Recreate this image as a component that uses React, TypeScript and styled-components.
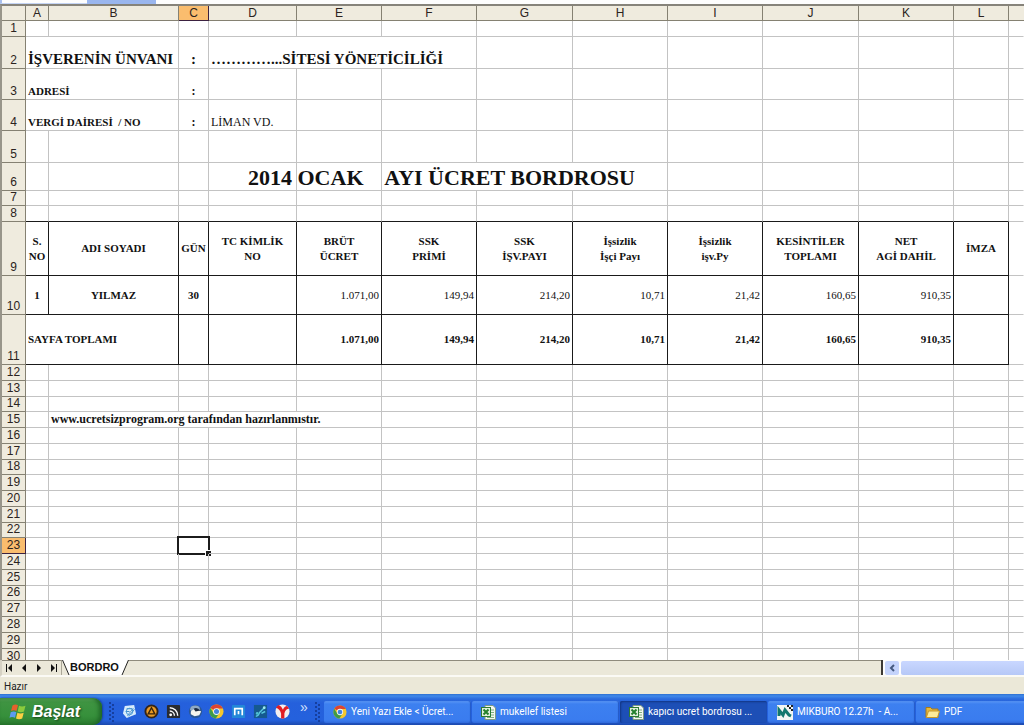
import React from "react";
import styled, { createGlobalStyle, css } from "styled-components";

const GlobalStyle = createGlobalStyle`
  *, *::before, *::after { box-sizing: border-box; }
  html, body { margin: 0; }
  button { font: inherit; color: inherit; background: none; border: 0; padding: 0; margin: 0; }
`;

const serif = `"Liberation Serif", "Times New Roman", serif`;
const sans = `"Liberation Sans", Arial, sans-serif`;
const ui = `Roboto, "Noto Sans", Tahoma, sans-serif`;

const Window = styled.div`
  display: flex;
  flex-direction: column;
  height: 100vh;
  min-height: 320px;
  overflow: hidden;
  background: #fff;
  font-family: ${sans};
`;

const ToolbarEdge = styled.div`
  flex: none;
  display: flex;
  height: 4px;
  background: #fdfdfd;
`;

const EdgeField = styled.span`
  width: 87px;
  border-left: 2px solid #a9c0ee;
  border-bottom: 1px solid #c3d3f3;
`;

const EdgeHighlight = styled.span`
  width: 69px;
  background: #9ab6ee;
`;

const SheetArea = styled.main`
  flex: 1;
  min-height: 0;
  overflow: hidden;
  border-left: 2px solid #98958a;
  border-top: 2px solid #86837a;
`;

const Grid = styled.table`
  width: 100%;
  table-layout: fixed;
  border-collapse: separate;
  border-spacing: 0;
  color: #111;
`;

const headBase = css<{ $active?: boolean }>`
  padding: 0;
  font-size: 12px;
  font-weight: 400;
  text-align: center;
  color: #2b2320;
  background: ${(p) => (p.$active ? "#fabd6e" : "#efebde")};
  border-right: 1px solid ${(p) => (p.$active ? "#3b2140" : "#858172")};
  border-bottom: 1px solid ${(p) => (p.$active ? "#3b2140" : "#858172")};
`;

const ColumnHead = styled.th<{ $active?: boolean }>`
  ${headBase}
  height: 15px;
  line-height: 14px;

  &:last-child { border-right: 0; }
`;

const RowHead = styled.th<{ $active?: boolean }>`
  ${headBase}
  padding-bottom: 1px;
  line-height: 13px;
  vertical-align: bottom;
`;

const Row = styled.tr<{ $height: number }>`
  height: ${(p) => p.$height}px;
`;

type CellLook = {
  $right: string;
  $bottom: string;
  $align?: string;
  $valign?: string;
  $bold?: boolean;
  $size?: number;
  $indent?: number;
};

const Cell = styled.td<CellLook>`
  position: relative;
  padding: 0 2px 0 ${(p) => p.$indent ?? 2}px;
  border-right: 1px solid ${(p) => p.$right};
  border-bottom: 1px solid ${(p) => p.$bottom};
  font-family: ${serif};
  font-size: ${(p) => p.$size ?? 11}px;
  font-weight: ${(p) => (p.$bold ? 700 : 400)};
  line-height: ${(p) => (p.$size && p.$size > 12 ? p.$size + 3 : 15)}px;
  text-align: ${(p) => p.$align ?? "left"};
  vertical-align: ${(p) => p.$valign ?? "bottom"};
  white-space: pre;
`;

const Selection = styled.span`
  position: absolute;
  inset: -2px;
  border: 2px solid #1c1c1c;

  &::after {
    content: "";
    position: absolute;
    right: -3px;
    bottom: -3px;
    width: 6px;
    height: 6px;
    background: #1c1c1c;
    border-top: 1px solid #fff;
    border-left: 1px solid #fff;
  }
`;

const TabBar = styled.nav`
  flex: none;
  display: flex;
  height: 17px;
  background: #ebe8d9;
  border-left: 2px solid #d6d2c4;
  border-bottom: 2px solid #fbfaf5;
`;

const TabArrows = styled.div`
  display: flex;
  width: 60px;
  border-top: 1px solid #8f8b7d;
  border-right: 1px solid #aaa698;
`;

const ArrowButton = styled.button`
  flex: 1;
  display: flex;
  align-items: center;
  justify-content: center;
`;

const SheetTab = styled.button`
  display: flex;
  align-items: center;
  font-size: 11px;
  line-height: 15px;
  font-weight: 700;
  color: #111;
`;

const TabLabel = styled.span`
  background: #fff;
`;

const TabFill = styled.div`
  flex: 1;
  border-top: 1px solid #8f8b7d;
`;

const ScrollTrack = styled.div`
  display: flex;
  gap: 2px;
  width: 14%;
  padding: 1px 0 0 2px;
  border-left: 2px solid #3d3a35;
  background: #fdfdfd;
`;

const ScrollButton = styled.button`
  display: flex;
  width: 14px;
  align-items: center;
  justify-content: center;
  background: #c4d3fb;
  border-radius: 2px;
`;

const ScrollThumb = styled.div`
  flex: 1;
  background: linear-gradient(#c9d7ff, #b6c8f7);
  border-radius: 2px 0 0 2px;
`;

const StatusBar = styled.footer`
  flex: none;
  height: 17px;
  padding-left: 4px;
  background: #ebe8d8;
  font-family: ${ui};
  font-size: 10px;
  line-height: 20px;
  color: #222;
`;

const Taskbar = styled.div`
  flex: none;
  display: flex;
  height: 31px;
  padding-top: 4px;
  color: #fff;
  background: linear-gradient(#2d6fd0 0, #4089ea 2px, #2b6add 5px, #2560dc 9px, #2461dd 26px, #1c49ad 31px);
`;

const StartButton = styled.button`
  display: flex;
  align-items: center;
  gap: 5px;
  width: 102px;
  padding-left: 9px;
  border-radius: 0 9px 9px 0;
  background: linear-gradient(#5fa75c 0, #3f9442 4px, #36903b 18px, #2a7a2f 27px);
  box-shadow: inset -3px 0 4px #1f6626, 1px 0 2px #173f99;
  font-size: 16px;
  font-weight: 700;
  font-style: italic;
  text-shadow: 1px 1px 2px #16451b;
`;

const QuickLaunch = styled.div`
  display: flex;
  align-items: center;
  width: 222px;
  padding: 0 3px 0 7px;
`;

const QuickButton = styled.button`
  display: flex;
  justify-content: center;
  flex: 1;
`;

const QuickIcons = styled.div`
  display: flex;
  flex: 1;
  padding: 0 4px 0 4px;
`;

const Chevron = styled.button`
  width: 14px;
  margin-right: 4px;
  font-size: 14px;
  line-height: 16px;
  padding-bottom: 10px;
  color: #d5e2fb;
`;

const TaskList = styled.div`
  flex: 1;
  display: flex;
  gap: 1px;
  min-width: 0;
  padding: 3px 0 2px;
  overflow: hidden;
`;

const TaskButton = styled.button<{ $active?: boolean }>`
  flex: 0 0 147px;
  display: flex;
  align-items: center;
  gap: 4px;
  padding-left: 9px;
  border-radius: 2px;
  font-family: ${ui};
  font-size: 10px;
  line-height: 14px;
  white-space: pre;
  text-align: left;
  background: ${(p) => (p.$active ? "#1d4fb6" : "linear-gradient(#5b97f5 0, #3d80f0 3px, #3a7cef 19px, #316bdc 22px)")};
  box-shadow: ${(p) => (p.$active ? "inset 1px 1px 2px #123583" : "inset -1px 0 1px #2459c6")};
`;

type CellSpec = {
  text?: string;
  span?: number;
  align?: string;
  valign?: string;
  bold?: boolean;
  size?: number;
  indent?: number;
};

const LETTERS = ["A", "B", "C", "D", "E", "F", "G", "H", "I", "J", "K", "L"];
const WIDTHS = [23, 130, 30, 88, 85, 95, 96, 95, 95, 96, 95, 55];

const HEIGHTS: Record<number, number> = {
  2: 32, 3: 31, 4: 31, 5: 32, 6: 28, 7: 15, 9: 54, 10: 39, 11: 50, 14: 15, 18: 15, 22: 15, 26: 15,
};

const mid = (text: string): CellSpec => ({ text, align: "center", valign: "middle", bold: true });
const amount = (text: string, bold = false): CellSpec => ({ text, align: "right", valign: "middle", bold });

/* Cells by row number, keyed by the letter of their first column. */
const CONTENT: Record<number, Record<string, CellSpec>> = {
  2: {
    A: { text: "İŞVERENİN ÜNVANI", span: 2, bold: true, size: 15 },
    C: { text: ":", align: "center", bold: true, size: 15 },
    D: { text: "…………...SİTESİ YÖNETİCİLİĞİ", span: 3, bold: true, size: 15 },
  },
  3: {
    A: { text: "ADRESİ", span: 2, bold: true },
    C: { text: ":", align: "center", bold: true, size: 12 },
  },
  4: {
    A: { text: "VERGİ DAİRESİ  / NO", span: 2, bold: true },
    C: { text: ":", align: "center", bold: true, size: 12 },
    D: { text: "LİMAN VD.", size: 12 },
  },
  6: {
    D: { text: "2014 OCAK    AYI ÜCRET BORDROSU", bold: true, size: 22, indent: 39 },
    F: { span: 3 },
  },
  9: {
    A: mid("S.\nNO"),
    B: mid("ADI SOYADI"),
    C: mid("GÜN"),
    D: mid("TC KİMLİK\nNO"),
    E: mid("BRÜT\nÜCRET"),
    F: mid("SSK\nPRİMİ"),
    G: mid("SSK\nİŞV.PAYI"),
    H: mid("İşsizlik\nİşçi Payı"),
    I: mid("İşsizlik\nişv.Py"),
    J: mid("KESİNTİLER\nTOPLAMI"),
    K: mid("NET\nAGİ DAHİL"),
    L: mid("İMZA"),
  },
  10: {
    A: mid("1"),
    B: mid("YILMAZ"),
    C: mid("30"),
    E: amount("1.071,00"),
    F: amount("149,94"),
    G: amount("214,20"),
    H: amount("10,71"),
    I: amount("21,42"),
    J: amount("160,65"),
    K: amount("910,35"),
  },
  11: {
    A: { text: "SAYFA TOPLAMI", span: 2, bold: true, valign: "middle" },
    E: amount("1.071,00", true),
    F: amount("149,94", true),
    G: amount("214,20", true),
    H: amount("10,71", true),
    I: amount("21,42", true),
    J: amount("160,65", true),
    K: amount("910,35", true),
  },
  15: {
    B: { text: "www.ucretsizprogram.org tarafından hazırlanmıstır.", span: 4, bold: true, size: 12 },
  },
};

const LINE = "#c3c3c3";
const INK = "#1a1a1a";

function SheetRow({ n }: { n: number }) {
  const boxed = n >= 9 && n <= 11;
  const cells: React.ReactNode[] = [];
  for (let i = 0; i < LETTERS.length; ) {
    const spec = CONTENT[n]?.[LETTERS[i]] ?? {};
    cells.push(
      <Cell
        key={LETTERS[i]}
        colSpan={spec.span}
        $right={boxed ? INK : LINE}
        $bottom={boxed || n === 8 ? INK : LINE}
        $align={spec.align}
        $valign={spec.valign}
        $bold={spec.bold}
        $size={spec.size}
        $indent={spec.indent}
      >
        {spec.text}
        {n === 23 && LETTERS[i] === "C" && <Selection />}
      </Cell>
    );
    i += spec.span ?? 1;
  }
  return (
    <Row $height={HEIGHTS[n] ?? 16}>
      <RowHead scope="row" $active={n === 23}>{n}</RowHead>
      {cells}
      <Cell $right="transparent" $bottom={LINE} />
    </Row>
  );
}

function Arrow({ flip, bar }: { flip?: boolean; bar?: boolean }) {
  return (
    <svg width="8" height="8" viewBox="0 0 8 8" fill="#111" aria-hidden="true">
      <g transform={flip ? "translate(8 0) scale(-1 1)" : undefined}>
        <path d={bar ? "M7 0v8L3 4z" : "M6 0v8L2 4z"} />
        {bar && <path d="M1 0h1v8H1z" />}
      </g>
    </svg>
  );
}

function Handle() {
  return (
    <svg width="6" height="20" viewBox="0 0 6 20" fill="#163f9e" aria-hidden="true">
      {[0, 4, 8, 12, 16].map((y) => (
        <g key={y}>
          <rect x="0" y={y} width="2" height="2" />
          <rect x="3" y={y + 2} width="2" height="2" />
        </g>
      ))}
    </svg>
  );
}

function WindowsFlag() {
  return (
    <svg width="18" height="18" viewBox="0 0 18 18" aria-hidden="true">
      <path d="M3.5 2.5q3-2 5.500-.2L7.500 8Q4.800 6.500 2 8z" fill="#e8602c" />
      <path d="M10 2.800q3 1.500 6.500 0L15 8.600q-3.200 1.500-6.300-.1z" fill="#8ccb3d" />
      <path d="M1.700 9.200q3-1.500 5.600 0L6 14.800q-3-1.700-5.500-.1z" fill="#5b9bf0" />
      <path d="M8.400 9.700q3 1.500 6.300 0l-1.500 5.800q-3.300 1.400-6.200-.1z" fill="#fbd043" />
    </svg>
  );
}

function Chrome({ size = 14 }: { size?: number }) {
  return (
    <svg width={size} height={size} viewBox="0 0 16 16" aria-hidden="true">
      <circle cx="8" cy="8" r="7.500" fill="#f4c72c" />
      <path d="M8 8 1.500 4.200A7.500 7.500 0 0 1 14.700 4.700H8z" fill="#dc4433" />
      <path d="M8 8 4.900 9.800 1.500 4.200A7.500 7.500 0 0 0 7.300 15.500L11 9.600z" fill="#3f9b48" />
      <circle cx="8" cy="8" r="3.600" fill="#f5f5f5" />
      <circle cx="8" cy="8" r="2.700" fill="#4484dc" />
    </svg>
  );
}

function Excel() {
  return (
    <svg width="15" height="15" viewBox="0 0 15 15" aria-hidden="true">
      <path d="M4 .5h8l2.500 2.500v11.500H4z" fill="#f3f6f0" stroke="#7e9b83" />
      <path d="M10 5h3M10 7.500h3M10 10h3M6 12.500h7" stroke="#7daf7d" />
      <rect x="0.500" y="2.500" width="9" height="9" fill="#e0efdd" stroke="#2d7b35" />
      <path d="m2.500 4.500 5 5m0-5-5 5" stroke="#24802d" strokeWidth="2" />
    </svg>
  );
}

function Mikburo() {
  return (
    <svg width="16" height="15" viewBox="0 0 16 15" aria-hidden="true">
      <rect width="16" height="15" fill="#f2f5f4" />
      <path d="M2 11V5l4 5 2-5 4 5 2 1" fill="none" stroke="#12776f" strokeWidth="3" />
      <path d="M10 0h2v2h-2zM14 0h2v2h-2zM12 2h2v2h-2zM14 4h2v2h-2z" fill="#222" />
    </svg>
  );
}

function Folder() {
  return (
    <svg width="15" height="14" viewBox="0 0 15 14" aria-hidden="true">
      <path d="M1 2.500h4.500L7 4h6v8.500H1z" fill="#e8b93c" stroke="#a67b1a" />
      <path d="M3.500 6H14.500l-2 6.500H1.300z" fill="#fdeb9a" stroke="#c7972b" />
    </svg>
  );
}

const quickIcons: { name: string; art: React.ReactNode }[] = [
  {
    name: "Masaüstünü göster",
    art: (
      <>
        <path d="M3 2 13 1l2 10-10 4-4-5z" fill="#d8ecfb" />
        <path d="M5 5h6M4 8h4M6 12l6-7 1 1-6 7z" stroke="#3a86c8" fill="#fff" />
        <circle cx="8" cy="8" r="3.500" fill="none" stroke="#4a9bd8" />
      </>
    ),
  },
  {
    name: "AIMP",
    art: (
      <>
        <circle cx="8" cy="8" r="6.500" fill="#e99a24" stroke="#33251a" strokeWidth="2" />
        <path d="m8 4 3.500 6.500h-7z" fill="none" stroke="#38240d" strokeWidth="1.500" />
      </>
    ),
  },
  {
    name: "RSS",
    art: (
      <>
        <rect x="1" y="1" width="14" height="14" rx="1" fill="#292b30" />
        <circle cx="5" cy="11.500" r="1.500" fill="#fff" />
        <path d="M4 7.500a5 5 0 0 1 5 5M4 4a8.500 8.500 0 0 1 8.500 8.500" fill="none" stroke="#fff" strokeWidth="1.500" />
      </>
    ),
  },
  {
    name: "Posta",
    art: (
      <>
        <circle cx="8" cy="8" r="7" fill="#2a5796" />
        <path d="M3 3q5-3 9 0l1 3-9 2-2-2z" fill="#8fa9c4" />
        <path d="M3 8q3-4 8-2l3 2-2 4-5 1-4-2z" fill="#f6f5ef" />
        <path d="M6 5q4-2 7 2l-5 1z" fill="#1c2a40" />
      </>
    ),
  },
  { name: "Chrome", art: <Chrome size={16} /> },
  {
    name: "Maxthon",
    art: (
      <>
        <rect x="1" y="1" width="14" height="14" rx="1" fill="#2388d8" />
        <path d="M4 12V5h8v7M8 7.500V11" fill="none" stroke="#fff" strokeWidth="1.800" />
      </>
    ),
  },
  {
    name: "Ağ bağlantısı",
    art: (
      <>
        <rect x="1" y="1" width="14" height="14" fill="#15598f" />
        <path d="M3 13q3 0 4-4M7 9l5-5M9 10l4-2" stroke="#59c9df" strokeWidth="1.500" fill="none" />
        <circle cx="12" cy="4" r="1.500" fill="#9ee9ee" />
        <circle cx="4.500" cy="10" r="1.500" fill="#4dbfd2" />
      </>
    ),
  },
  {
    name: "Yandex",
    art: (
      <>
        <circle cx="8" cy="8" r="7.500" fill="#f3eeee" />
        <path d="M1 4q1-2 3-3 3 1 4.500 5Q10 2 13 2l2 3q-4 0-5 5v5.500H6.500V10Q5 5 1 4z" fill="#e21d24" />
      </>
    ),
  },
];

const tasks: { title: string; icon: React.ReactNode; active?: boolean }[] = [
  { title: "Yeni Yazı Ekle < Ücret...", icon: <Chrome /> },
  { title: "mukellef listesi", icon: <Excel /> },
  { title: "kapıcı ucret bordrosu ...", icon: <Excel />, active: true },
  { title: "MIKBURO 12.27h  - A...", icon: <Mikburo /> },
  { title: "PDF", icon: <Folder /> },
];

export default function App() {
  return (
    <Window>
      <GlobalStyle />
      <ToolbarEdge>
        <EdgeField />
        <EdgeHighlight />
      </ToolbarEdge>
      <SheetArea>
        <Grid>
          <colgroup>
            <col style={{ width: 24 }} />
            {WIDTHS.map((w, i) => (
              <col key={LETTERS[i]} style={{ width: w }} />
            ))}
            <col />
          </colgroup>
          <thead>
            <tr>
              <ColumnHead />
              {LETTERS.map((l) => (
                <ColumnHead key={l} scope="col" $active={l === "C"}>{l}</ColumnHead>
              ))}
              <ColumnHead />
            </tr>
          </thead>
          <tbody>
            {Array.from({ length: 30 }, (_, i) => (
              <SheetRow key={i} n={i + 1} />
            ))}
          </tbody>
        </Grid>
      </SheetArea>
      <TabBar>
        <TabArrows>
          <ArrowButton aria-label="İlk sayfa"><Arrow bar /></ArrowButton>
          <ArrowButton aria-label="Önceki sayfa"><Arrow /></ArrowButton>
          <ArrowButton aria-label="Sonraki sayfa"><Arrow flip /></ArrowButton>
          <ArrowButton aria-label="Son sayfa"><Arrow flip bar /></ArrowButton>
        </TabArrows>
        <SheetTab>
          <svg width="8" height="15" viewBox="0 0 8 15" aria-hidden="true">
            <path d="M0 0h8v15h-1z" fill="#fff" />
            <path d="M.5 0 7 15" stroke="#222" />
          </svg>
          <TabLabel>BORDRO</TabLabel>
          <svg width="10" height="15" viewBox="0 0 10 15" aria-hidden="true">
            <path d="M0 0h9L3 15H0z" fill="#fff" />
            <path d="M9.500 0 3 15" stroke="#222" />
          </svg>
        </SheetTab>
        <TabFill />
        <ScrollTrack>
          <ScrollButton aria-label="Sola kaydır">
            <svg width="6" height="8" viewBox="0 0 6 8" aria-hidden="true">
              <path d="M5 1 2 4l3 3" fill="none" stroke="#45597f" strokeWidth="2" />
            </svg>
          </ScrollButton>
          <ScrollThumb />
        </ScrollTrack>
      </TabBar>
      <StatusBar>Hazır</StatusBar>
      <Taskbar>
        <StartButton>
          <WindowsFlag />
          Başlat
        </StartButton>
        <QuickLaunch>
          <Handle />
          <QuickIcons>
            {quickIcons.map((q) => (
              <QuickButton key={q.name} aria-label={q.name}>
                <svg width="15" height="15" viewBox="0 0 16 16" aria-hidden="true">{q.art}</svg>
              </QuickButton>
            ))}
          </QuickIcons>
          <Chevron aria-label="Diğer simgeler">»</Chevron>
          <Handle />
        </QuickLaunch>
        <TaskList>
          {tasks.map((t) => (
            <TaskButton key={t.title} $active={t.active}>
              {t.icon}
              {t.title}
            </TaskButton>
          ))}
        </TaskList>
      </Taskbar>
    </Window>
  );
}
